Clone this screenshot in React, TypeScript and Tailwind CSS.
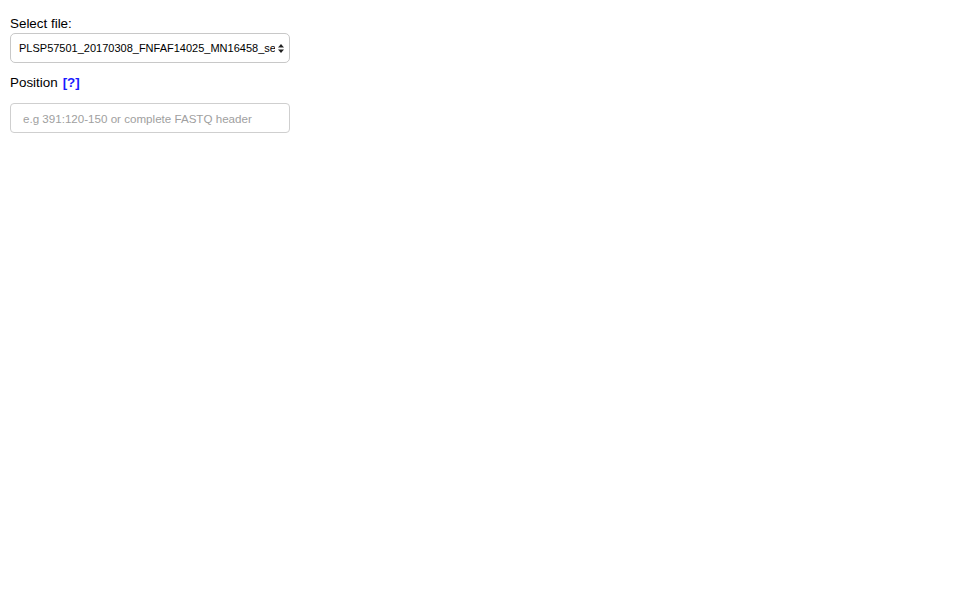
const App = () => {
  return (
    <div
      className="min-h-screen w-full bg-white pl-[10px] pt-[16px] text-[13.4px] leading-4 text-black"
      style={{ fontFamily: '"Liberation Sans", Arial, sans-serif' }}
    >
      <div className="w-[280px]">
        {/* File picker */}
        <label className="block">Select file:</label>
        <div className="relative mt-[1px] h-[30px] rounded-[5px] border border-[#c8c8c8] bg-white">
          <select className="h-full w-full appearance-none overflow-hidden rounded-[5px] bg-transparent pl-[8px] pr-[14px] text-[11px] text-black outline-none">
            <option>PLSP57501_20170308_FNFAF14025_MN16458_sequencing_run_reads.fastq</option>
          </select>
          <svg
            className="pointer-events-none absolute right-[5px] top-[10px]"
            width="6"
            height="9"
            viewBox="0 0 6 9"
          >
            <path d="M3 0 L6 3.5 L0 3.5 Z" fill="#222" />
            <path d="M0 5.5 L6 5.5 L3 9 Z" fill="#222" />
          </svg>
        </div>

        {/* Position */}
        <div className="mt-[12px] flex items-center">
          <span>Position</span>
          <a className="ml-[5px] font-bold text-[#1a1aff]">[?]</a>
        </div>
        <input
          type="text"
          placeholder="e.g 391:120-150 or complete FASTQ header"
          className="mt-[12px] h-[30px] w-full rounded-[4px] border border-[#cfcfcf] px-[12px] text-[11.6px] outline-none placeholder:text-[#a0a0a0]"
        />
      </div>
    </div>
  );
};

export default App;
